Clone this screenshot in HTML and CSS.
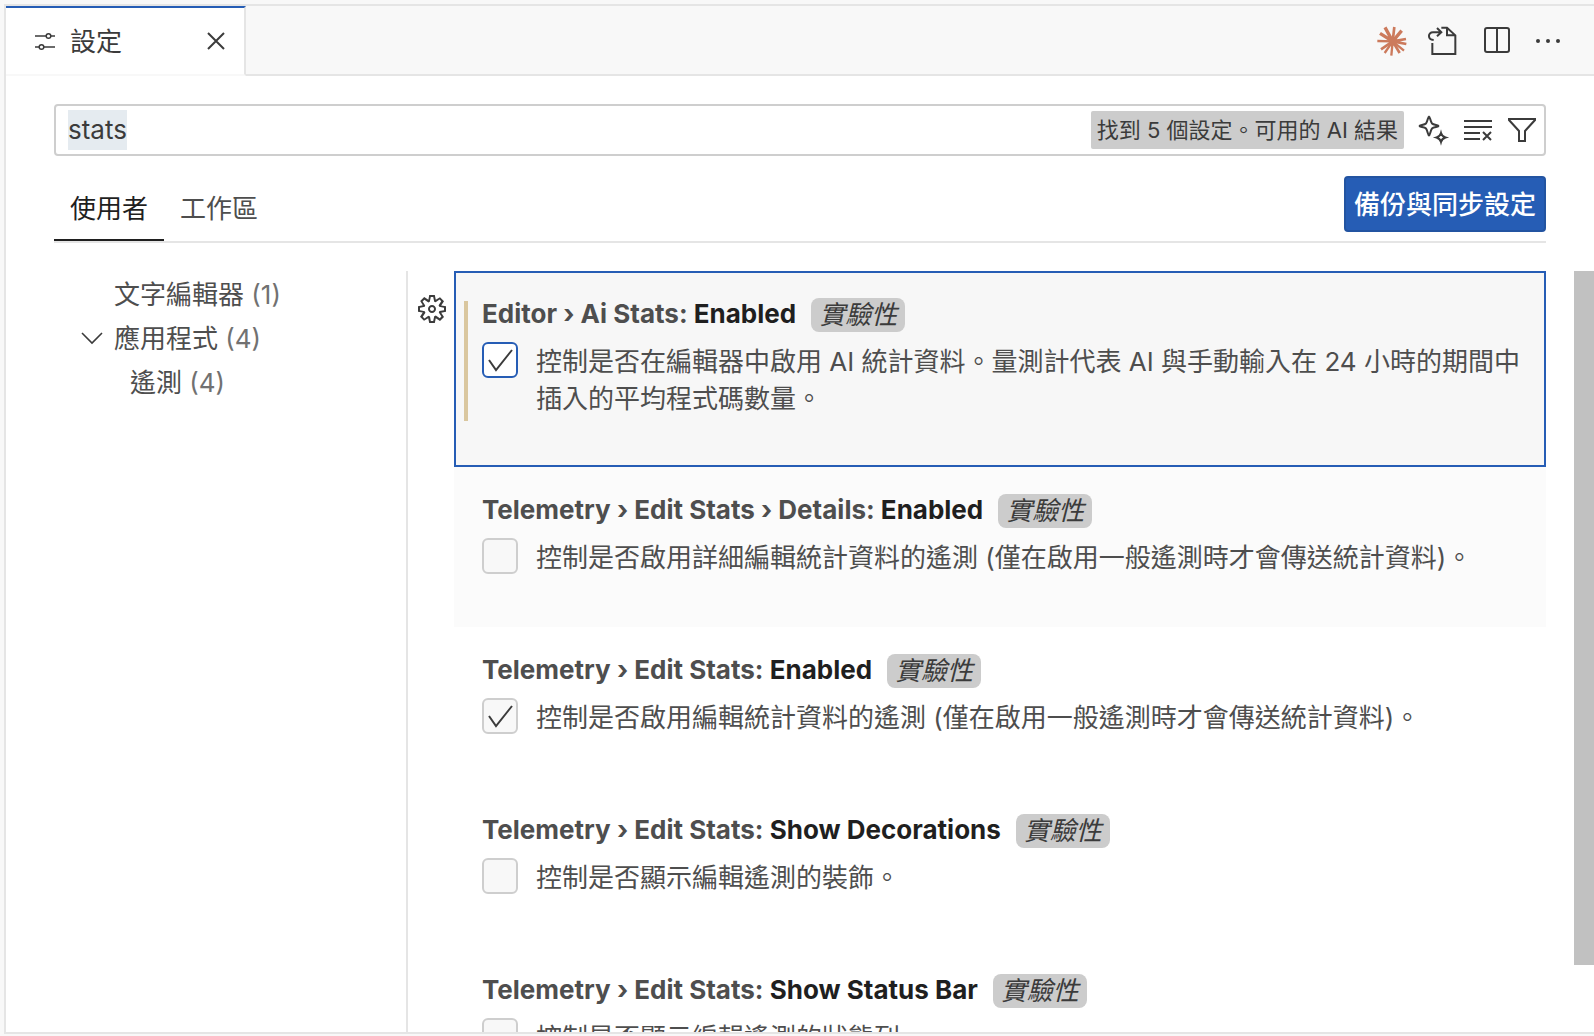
FILE: index.html
```html
<!DOCTYPE html>
<html lang="zh-Hant">
<head>
<meta charset="utf-8">
<meta name="viewport" content="width=device-width, initial-scale=1">
<title>設定</title>
<link rel="stylesheet" href="styles.css">
</head>
<body>
<div class="editor">
  <header class="tab-bar">
    <div class="tab">
      <svg class="icon tab-icon" viewBox="0 0 32 32" aria-hidden="true"><path d="M7 11h11M23 11h4M7 22h4M16 22h11"/><circle cx="20.500" cy="11" r="2.300"/><circle cx="13.500" cy="22" r="2.300"/></svg>
      <span class="tab-title">設定</span>
      <button class="icon-button" type="button" aria-label="關閉"><svg class="icon" viewBox="0 0 32 32"><path d="M8 8l16 16M24 8L8 24"/></svg></button>
    </div>
    <div class="actions">
      <button class="icon-button" type="button" aria-label="Claude"><svg class="icon claude" viewBox="0 0 96 96"><path stroke-width="10" d="M50 49L27 7M50 49L77 17M50 49L12 25"/><path stroke-width="8" d="M50 49L55 6M50 49L90 42M50 49L91 57M50 49L71 84M50 49L15 73"/><path stroke-width="7" d="M50 49L4 48M50 49L84 77M50 49L46 92M50 49L26 84"/><circle cx="51" cy="49" r="13"/></svg></button>
      <button class="icon-button" type="button" aria-label="開啟設定檔"><svg class="icon open-file" viewBox="0 0 96 96"><path d="M17 45C-2 43-1 22 15 22H38M27 9L40 22L27 34M13 54V87H82V31L57 8H40M57 8V31H82"/></svg></button>
      <button class="icon-button" type="button" aria-label="分割編輯器"><svg class="icon" viewBox="0 0 32 32"><rect x="5" y="3" width="24" height="24" rx="2"/><path d="M17 3v24"/></svg></button>
      <button class="icon-button" type="button" aria-label="更多動作"><svg class="icon dots" viewBox="0 0 32 32"><circle cx="6" cy="16" r="2"/><circle cx="16" cy="16" r="2"/><circle cx="26" cy="16" r="2"/></svg></button>
    </div>
  </header>

  <main class="settings">
    <div class="search">
      <input class="search-input" id="search" type="text" value="stats" aria-label="搜尋設定" spellcheck="false">
      <span class="count">找到 5 個設定。可用的 AI 結果</span>
      <button class="search-button" type="button" aria-label="AI 結果"><svg class="icon" viewBox="0 0 32 32"><path d="M11 2.500C12 2.500 12.500 8 14 9.500C15.500 11 20.500 11 20.500 12C20.500 13 15.500 13 14 14.500C12.500 16 12 21.500 11 21.500C10 21.500 9.500 16 8 14.500C6.500 13 1.500 13 1.500 12C1.500 11 6.500 11 8 9.500C9.500 8 10 2.500 11 2.500ZM23 19Q24 22.500 27.500 23.500Q24 24.500 23 28Q22 24.500 18.500 23.500Q22 22.500 23 19Z"/></svg></button>
      <button class="search-button" type="button" aria-label="清除搜尋"><svg class="icon" viewBox="0 0 32 32"><path d="M2 7h28M2 13h28M2 19h16M2 25h16M21 18l8 8M29 18l-8 8"/></svg></button>
      <button class="search-button" type="button" aria-label="篩選"><svg class="icon" viewBox="0 0 32 32"><path d="M3 5H29V6L19 17V27H13V17L3 6Z"/></svg></button>
    </div>

    <div class="scope-bar">
      <nav class="scopes">
        <button class="scope scope-active" type="button">使用者</button>
        <button class="scope" type="button">工作區</button>
      </nav>
      <button class="sync" type="button">備份與同步設定</button>
    </div>

    <div class="body">
      <nav class="toc">
        <a class="toc-row" href="#editor"><span class="twisty"></span><span>文字編輯器 <span class="toc-count">(1)</span></span></a>
        <a class="toc-row" href="#application"><span class="twisty"><svg class="icon chevron" viewBox="0 0 32 32"><path d="M6 10l10 10l10-10"/></svg></span><span>應用程式 <span class="toc-count">(4)</span></span></a>
        <a class="toc-row toc-child" href="#telemetry"><span class="twisty"></span><span>遙測 <span class="toc-count">(4)</span></span></a>
      </nav>

      <div class="list">
        <section class="row">
          <button class="gear" type="button" aria-label="更多動作"><svg viewBox="0 0 16 16"><path d="M9.100 4.400L8.600 2H7.400l-.5 2.400-.7.3-2-1.300-.9.8 1.300 2-.2.7-2.400.5v1.200l2.400.5.3.8-1.300 2 .8.8 2-1.300.8.3.4 2.300h1.200l.5-2.400.8-.3 2 1.300.8-.8-1.300-2 .3-.8 2.300-.4V7.400l-2.400-.5-.3-.8 1.300-2-.8-.8-2 1.300-.7-.2zM9.400 1l.5 2.400L12 2.100l2 2-1.400 2.100 2.400.4v2.800l-2.400.5L14 12l-2 2-2.100-1.400-.5 2.400H6.600l-.5-2.400L4 13.900l-2-2 1.400-2.100L1 9.400V6.600l2.400-.5L2.100 4l2-2 2.100 1.400.4-2.400h2.800zm.6 7c0 1.100-.9 2-2 2s-2-.9-2-2 .9-2 2-2 2 .9 2 2zM8 9c.6 0 1-.4 1-1s-.4-1-1-1-1 .4-1 1 .4 1 1 1z"/></svg></button>
          <div class="item item-focused">
            <h2 class="title"><span>Editor › Ai Stats: <b>Enabled</b></span><em class="tag">實驗性</em></h2>
            <label class="option"><span class="box"><input class="check" type="checkbox" checked><svg class="tick" viewBox="0 0 36 36"><path d="M7 18l7 10L30 8"/></svg></span><span class="description">控制是否在編輯器中啟用 AI 統計資料。量測計代表 AI 與手動輸入在 24 小時的期間中插入的平均程式碼數量。</span></label>
          </div>
        </section>
        <section class="row">
          <div class="item item-hover">
            <h2 class="title"><span>Telemetry › Edit Stats › Details: <b>Enabled</b></span><em class="tag">實驗性</em></h2>
            <label class="option"><span class="box"><input class="check" type="checkbox"></span><span class="description">控制是否啟用詳細編輯統計資料的遙測 (僅在啟用一般遙測時才會傳送統計資料)。</span></label>
          </div>
        </section>
        <section class="row">
          <div class="item">
            <h2 class="title"><span>Telemetry › Edit Stats: <b>Enabled</b></span><em class="tag">實驗性</em></h2>
            <label class="option"><span class="box"><input class="check" type="checkbox" checked><svg class="tick" viewBox="0 0 36 36"><path d="M7 18l7 10L30 8"/></svg></span><span class="description">控制是否啟用編輯統計資料的遙測 (僅在啟用一般遙測時才會傳送統計資料)。</span></label>
          </div>
        </section>
        <section class="row">
          <div class="item">
            <h2 class="title"><span>Telemetry › Edit Stats: <b>Show Decorations</b></span><em class="tag">實驗性</em></h2>
            <label class="option"><span class="box"><input class="check" type="checkbox"></span><span class="description">控制是否顯示編輯遙測的裝飾。</span></label>
          </div>
        </section>
        <section class="row">
          <div class="item">
            <h2 class="title"><span>Telemetry › Edit Stats: <b>Show Status Bar</b></span><em class="tag">實驗性</em></h2>
            <label class="option"><span class="box"><input class="check" type="checkbox"></span><span class="description">控制是否顯示編輯遙測的狀態列。</span></label>
          </div>
        </section>
      </div>
      <div class="scrollbar"><div class="thumb"></div></div>
    </div>
  </main>
</div>
<script src="main.js"></script>
</body>
</html>
```
FILE: styles.css
```css
* { box-sizing: border-box; }

body {
  margin: 0;
  height: 100vh;
  display: flex;
  padding: 4px 0 2px 4px;
  overflow: hidden;
  background: #f8f8f8;
  color: #4e4e4e;
  font: 26px/36px Inter, "Noto Sans CJK TC", sans-serif;
}

button {
  border: 0;
  padding: 0;
  background: none;
  color: inherit;
  font: inherit;
}

.editor {
  flex: 1;
  min-width: 0;
  display: flex;
  flex-direction: column;
  border: 2px solid #e5e5e5;
  border-right: 0;
  background: #fff;
}

.icon {
  display: block;
  width: 32px;
  height: 32px;
  fill: none;
  stroke: #3b3b3b;
  stroke-width: 2;
  overflow: visible;
}

/* Tab bar */
.tab-bar {
  display: flex;
  height: 70px;
  flex: none;
}

.tab {
  display: flex;
  align-items: center;
  width: 240px;
  padding: 0 6px 0 22px;
  border-top: 2px solid #265db5;
  border-right: 2px solid #e5e5e5;
  border-bottom: 2px solid #f8f8f8;
  color: #3b3b3b;
}

.tab-icon { stroke-width: 1.5; }
.tab-title { flex: 1; padding: 2px 0 0 10px; }

.icon-button {
  display: grid;
  place-items: center;
  width: 44px;
  height: 44px;
}

.actions {
  flex: 1;
  display: flex;
  justify-content: flex-end;
  align-items: center;
  gap: 8px;
  padding: 2px 24px 0 0;
  background: #f8f8f8;
  border-bottom: 2px solid #e5e5e5;
}

.claude { stroke: #cc7a5c; stroke-linecap: butt; }
.claude circle { fill: #cc7a5c; stroke: none; }
.open-file { stroke-width: 6; }
.dots { fill: #3b3b3b; stroke: none; }

/* Settings editor */
.settings {
  flex: 1;
  min-height: 0;
  display: flex;
  flex-direction: column;
  padding-top: 28px;
}

.search {
  display: flex;
  align-items: center;
  gap: 12px;
  height: 52px;
  flex: none;
  margin: 0 48px;
  padding: 0 6px 0 12px;
  border: 2px solid #cecece;
  border-radius: 4px;
}

.search-input {
  flex: 1;
  min-width: 0;
  height: 40px;
  padding: 0;
  border: 0;
  outline: 0;
  background: none;
  color: #3b3b3b;
  font: inherit;
  line-height: 40px;
}

.search-input::selection { background: #e5ebf0; color: #3b3b3b; }

.count {
  margin-right: 2px;
  padding: 0 6px;
  border-radius: 2px;
  background: #ccc;
  color: #3b3b3b;
  font-size: 22px;
  line-height: 38px;
  white-space: nowrap;
}

.scope-bar {
  display: flex;
  justify-content: space-between;
  align-items: flex-start;
  flex: none;
  margin: 20px 48px 28px;
  border-bottom: 2px solid #e5e5e5;
}

.scopes { display: flex; }

.scope {
  height: 65px;
  padding: 2px 16px 0;
  border-bottom: 2px solid transparent;
}

.scope-active { border-color: #1f1f1f; color: #1f1f1f; }

.sync {
  height: 56px;
  padding: 2px 8px 0;
  border: 2px solid #2354a1;
  border-radius: 4px;
  background: #265db5;
  color: #fff;
  font-weight: 500;
}

.body {
  flex: 1;
  min-height: 0;
  display: flex;
}

.toc {
  width: 402px;
  flex: none;
  padding: 2px 0 0 70px;
  border-right: 2px solid #e5e5e5;
}

.toc-row {
  display: flex;
  align-items: center;
  gap: 6px;
  height: 44px;
  color: inherit;
  text-decoration: none;
}

.toc-child { padding-left: 16px; }
.twisty { width: 32px; }
.chevron { stroke-width: 1.6; }
.toc-count { color: #717171; }

.list {
  flex: 1;
  min-width: 0;
  overflow: hidden;
}

.row {
  display: flex;
  justify-content: flex-end;
  padding: 0 28px 0 8px;
}

.gear {
  width: 32px;
  height: 32px;
  flex: none;
  margin: 22px 6px 0 0;
}

.gear svg { display: block; fill: #3b3b3b; }

.item {
  position: relative;
  flex: 1;
  min-width: 0;
  min-height: 160px;
  margin-left: 38px;
  padding: 27px 24px 50px 28px;
}

.gear + .item { margin-left: 0; }

.item-focused {
  outline: 2px solid #265db5;
  outline-offset: -2px;
  background: #f7f7f7;
}

.item-focused::before {
  content: "";
  position: absolute;
  top: 30px;
  bottom: 46px;
  left: 10px;
  width: 4px;
  background: #dac79f;
}

.item-hover { background: #fbfbfb; }

.title {
  display: flex;
  gap: 15px;
  margin: 0 0 10px;
  font-size: 26px;
  font-weight: 650;
  line-height: 32px;
}

.title b { color: #1f1f1f; font-weight: 650; }

.tag {
  padding: 0 8px;
  border-radius: 8px;
  background: #ccc;
  color: #3b3b3b;
  font-weight: 400;
  line-height: 34px;
}

.option { display: flex; gap: 18px; }
.description { padding-top: 1px; line-height: 37px; }

.box {
  display: grid;
  width: 36px;
  height: 36px;
  flex: none;
}

.check, .tick { grid-area: 1 / 1; }

.check {
  appearance: none;
  width: 36px;
  height: 36px;
  margin: 0;
  border: 2px solid #cecece;
  border-radius: 6px;
  background: #f8f8f8;
}

.item-focused .check { border-color: #265db5; background: #fff; }

.tick {
  fill: none;
  stroke: #3b3b3b;
  stroke-width: 2;
}

.scrollbar { width: 20px; flex: none; }
.thumb { height: 91.2%; background: #c1c1c1; }
```
FILE: main.js
```js
const search = document.getElementById("search");
search.focus();
search.select();
```
